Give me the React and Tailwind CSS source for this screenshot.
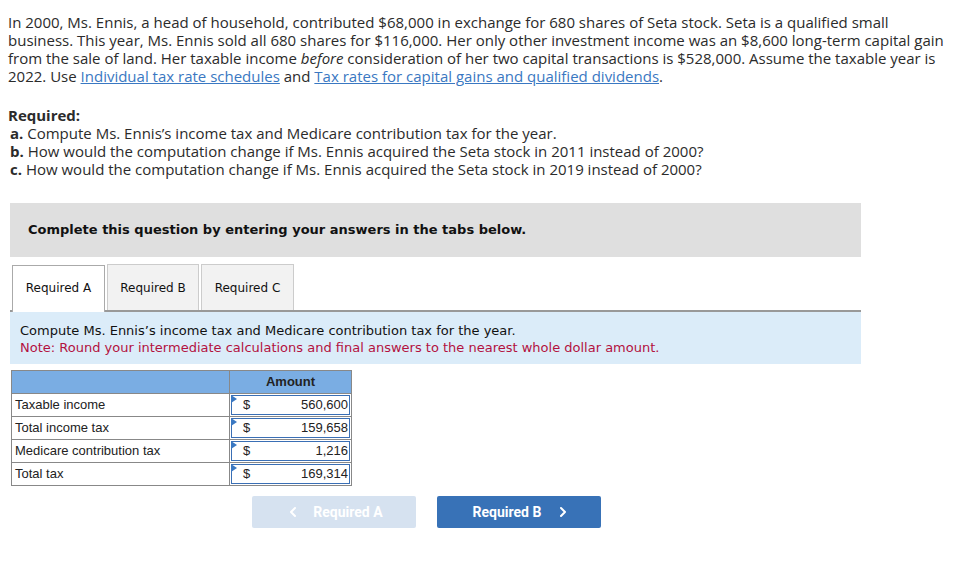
import { ChevronLeft, ChevronRight } from "lucide-react";

const rows = [
  { label: "Taxable income", value: "560,600" },
  { label: "Total income tax", value: "159,658" },
  { label: "Medicare contribution tax", value: "1,216" },
  { label: "Total tax", value: "169,314" },
];

const tabFont = { fontFamily: '"DejaVu Sans", Verdana, sans-serif' };

const App = () => {
  return (
    <div className="w-[972px] h-[578px] bg-white text-[#2b2b2b]">
      <div className="pl-[8px] pt-[13px] font-['Open_Sans',sans-serif] text-[15px] leading-[18px] whitespace-nowrap">
        <p>
          In 2000, Ms. Ennis, a head of household, contributed $68,000 in exchange for 680 shares of Seta stock. Seta is a qualified small<br />
          business. This year, Ms. Ennis sold all 680 shares for $116,000. Her only other investment income was an $8,600 long-term capital gain<br />
          from the sale of land. Her taxable income <i>before</i> consideration of her two capital transactions is $528,000. Assume the taxable year is<br />
          2022. Use{" "}
          <a className="text-[#3a78c2] underline">Individual tax rate schedules</a> and{" "}
          <a className="text-[#3a78c2] underline">Tax rates for capital gains and qualified dividends</a>.
        </p>
        <p className="mt-[21px] font-bold">Required:</p>
        <ul className="pl-[2px]">
          <li><b>a.</b> Compute Ms. Ennis’s income tax and Medicare contribution tax for the year.</li>
          <li><b>b.</b> How would the computation change if Ms. Ennis acquired the Seta stock in 2011 instead of 2000?</li>
          <li><b>c.</b> How would the computation change if Ms. Ennis acquired the Seta stock in 2019 instead of 2000?</li>
        </ul>
      </div>

      <div className="ml-[10px] w-[851px] mt-[25px]" style={tabFont}>
        <div className="h-[54px] bg-[#dfdfdf] flex items-center pl-[18px] text-[13px] font-bold text-[#111]">
          Complete this question by entering your answers in the tabs below.
        </div>

        <div className="mt-[7px] flex items-end gap-[2px] pl-[2px] border-b-2 border-[#999] h-[48px]">
          <div className="h-[47px] w-[93px] bg-white border border-b-0 border-[#aaa] flex items-center justify-center text-[12px] text-[#111] -mb-[2px] pb-[2px]">
            Required A
          </div>
          <div className="h-[46px] w-[92px] bg-[#f2f2f2] border border-b-0 border-[#ccc] flex items-center justify-center text-[12px] text-[#111]">
            Required B
          </div>
          <div className="h-[46px] w-[93px] bg-[#f2f2f2] border border-b-0 border-[#ccc] flex items-center justify-center text-[12px] text-[#111]">
            Required C
          </div>
        </div>

        <div className="bg-[#dbecf9] h-[52px] pl-[10px] pt-[10px] text-[13px] leading-[17px]">
          <p className="text-[#111]">Compute Ms. Ennis’s income tax and Medicare contribution tax for the year.</p>
          <p className="text-[#b3123f]">Note: Round your intermediate calculations and final answers to the nearest whole dollar amount.</p>
        </div>
      </div>

      <table className="ml-[11px] mt-[6px] border-collapse font-['Liberation_Sans',Arial,sans-serif] text-[13px] text-[#222]">
        <thead>
          <tr className="bg-[#7aade3] h-[23px]">
            <th className="w-[218px] border border-[#888]"></th>
            <th className="w-[122px] border border-[#888] font-bold text-[#222]">Amount</th>
          </tr>
        </thead>
        <tbody>
          {rows.map((r) => (
            <tr key={r.label} className="h-[23px]">
              <td className="border border-[#888] pl-[3px]">{r.label}</td>
              <td className="border border-[#888] p-[1px] relative">
                <span className="absolute left-[1px] top-[1px] w-0 h-0 border-t-[4px] border-b-[4px] border-l-[6px] border-t-transparent border-b-transparent border-l-[#3a78c2]"></span>
                <div className="flex justify-between items-center h-[20px] border border-[#3a6fb5] pl-[11px] pr-[1px]">
                  <span>$</span>
                  <span>{r.value}</span>
                </div>
              </td>
            </tr>
          ))}
        </tbody>
      </table>

      <div className="flex gap-[21px] ml-[252px] mt-[10px] font-['Roboto',sans-serif] text-[14px] font-bold text-white">
        <button className="w-[164px] h-[32px] rounded-[2px] bg-[#d6e2f0] flex items-center justify-center gap-[12px]">
          <ChevronLeft size={16} strokeWidth={3} />
          <span>Required A</span>
        </button>
        <button className="w-[164px] h-[32px] rounded-[2px] bg-[#3872b7] flex items-center justify-center gap-[14px] pl-[6px]">
          <span>Required B</span>
          <ChevronRight size={16} strokeWidth={3} />
        </button>
      </div>
    </div>
  );
};

export default App;
